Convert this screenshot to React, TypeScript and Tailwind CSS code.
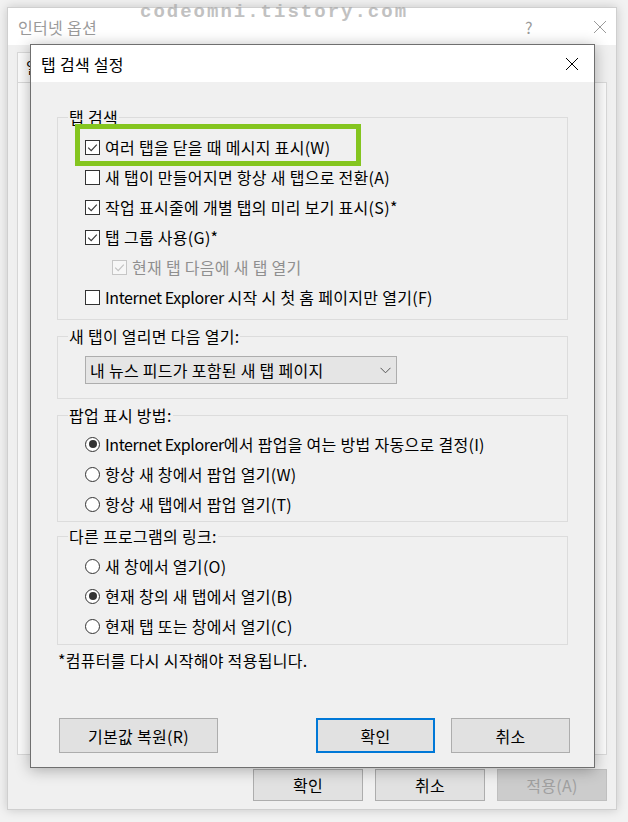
import React from "react";

const FONT = "font-['Noto_Sans_CJK_KR','Noto_Sans',sans-serif]";

function CheckBox({ checked, disabled }: { checked?: boolean; disabled?: boolean }) {
  return (
    <span
      className={`w-[15px] h-[15px] shrink-0 border flex items-center justify-center ${
        disabled ? "border-[#c6c6c6] bg-[#f7f7f7]" : "border-[#333333] bg-white"
      }`}
    >
      {checked && (
        <svg width="11" height="11" viewBox="0 0 11 11">
          <polyline
            points="1.2,5.6 4.2,8.6 9.8,2.6"
            fill="none"
            stroke={disabled ? "#c2c2c2" : "#3a3a3a"}
            strokeWidth="1.2"
          />
        </svg>
      )}
    </span>
  );
}

function Radio({ checked }: { checked?: boolean }) {
  return (
    <span className="w-[15px] h-[15px] shrink-0 rounded-full border border-[#333333] bg-white flex items-center justify-center">
      {checked && <span className="w-[8px] h-[8px] rounded-full bg-[#333333]" />}
    </span>
  );
}

// Latin runs are a bit narrower in the original font
function IE() {
  return <span className="tracking-[-0.4px]">Internet Explorer</span>;
}

function CheckRow({
  children,
  checked,
  disabled,
  indent,
}: {
  children: React.ReactNode;
  checked?: boolean;
  disabled?: boolean;
  indent?: boolean;
}) {
  return (
    <div className={`h-[30px] flex items-center gap-[5px] ${indent ? "pl-[27px]" : ""}`}>
      <CheckBox checked={checked} disabled={disabled} />
      <span className={disabled ? "text-[#8f8f8f]" : "text-black"}>{children}</span>
    </div>
  );
}

function RadioRow({ children, checked }: { children: React.ReactNode; checked?: boolean }) {
  return (
    <div className="h-[30px] flex items-center gap-[5px]">
      <Radio checked={checked} />
      <span>{children}</span>
    </div>
  );
}

function CloseIcon({ color = "#000" }: { color?: string }) {
  return (
    <svg width="14" height="14" viewBox="0 0 14 14">
      <path d="M1 1 L13 13 M13 1 L1 13" stroke={color} strokeWidth="1" fill="none" />
    </svg>
  );
}

export default function App() {
  return (
    <div className={`relative w-[628px] h-[822px] overflow-hidden bg-[#f2f2f2] text-[16px] tracking-[0.3px] ${FONT}`}>
      {/* back window: 인터넷 옵션 */}
      <div className="absolute left-[7px] top-[7px] w-[610px] h-[803px] bg-[#f0f0f0] border border-[#cfcfcf] shadow-[0_0_10px_rgba(0,0,0,0.18)] flex flex-col">
        <div className="h-[37px] bg-white flex items-center pl-[10px] text-[#9a9a9a]">
          <span>인터넷 옵션</span>
          <span className="ml-auto mr-[60px] text-[16px]">?</span>
          <span className="mr-[9px]">
            <CloseIcon color="#9a9a9a" />
          </span>
        </div>
        <div className="flex-1 flex flex-col px-[9px] pt-[7px]">
          <div className="h-[31px] w-[50px] border-t border-l border-r border-[#d9d9d9] bg-[#fbfbfb] -mb-[1px] pl-[8px] pt-[6px] text-[15px] leading-none">
            일반
          </div>
          <div className="h-[673px] border border-[#d9d9d9] bg-[#fbfbfb]" />
          <div className="mt-[14px] flex justify-end gap-[12px]">
            <div className="w-[110px] h-[32px] border border-[#adadad] bg-[#e1e1e1] flex items-center justify-center">확인</div>
            <div className="w-[110px] h-[32px] border border-[#adadad] bg-[#e1e1e1] flex items-center justify-center">취소</div>
            <div className="w-[110px] h-[32px] border border-[#bfbfbf] bg-[#cccccc] text-[#a0a0a0] flex items-center justify-center">적용(A)</div>
          </div>
        </div>
      </div>

      {/* watermark */}
      <div className="absolute left-[140px] top-[1px] font-['Liberation_Mono',monospace] font-bold text-[19px] tracking-[2px] leading-[22px] text-[#a8a8a8] opacity-70">
        codeomni.tistory.com
      </div>

      {/* front window: 탭 검색 설정 */}
      <div className="absolute left-[30px] top-[44px] w-[565px] h-[724px] border border-[#6f6f6f] bg-[#f0f0f0] shadow-[0_2px_14px_rgba(0,0,0,0.3)] flex flex-col">
        <div className="h-[37px] shrink-0 bg-white flex items-center pl-[10px] pr-[15px] text-black">
          <span>탭 검색 설정</span>
          <span className="ml-auto">
            <CloseIcon />
          </span>
        </div>

        <div className="flex-1 flex flex-col px-[26px] pb-[14px]">
          <fieldset className="mt-[24px] border border-[#dcdcdc] pl-[10px] pb-[7px]">
            <legend className="px-[1px] leading-[22px]">탭 검색</legend>
            <div className="relative ml-[17px] pt-[4px]">
              <div className="absolute left-[-10px] top-[-4px] w-[286px] h-[42px] border-[5px] border-[#84c51f]" />
              <CheckRow checked>여러 탭을 닫을 때 메시지 표시(W)</CheckRow>
              <CheckRow>새 탭이 만들어지면 항상 새 탭으로 전환(A)</CheckRow>
              <CheckRow checked>작업 표시줄에 개별 탭의 미리 보기 표시(S)*</CheckRow>
              <CheckRow checked>탭 그룹 사용(G)*</CheckRow>
              <CheckRow checked disabled indent>현재 탭 다음에 새 탭 열기</CheckRow>
              <CheckRow>
                <IE /> 시작 시 첫 홈 페이지만 열기(F)
              </CheckRow>
            </div>
          </fieldset>

          <fieldset className="mt-[5px] border border-[#dcdcdc] pl-[10px] pb-[14px]">
            <legend className="px-[1px] leading-[22px]">새 탭이 열리면 다음 열기:</legend>
            <div className="ml-[17px] pt-[9px]">
              <div className="w-[312px] h-[28px] border border-[#adadad] bg-[#e5e5e5] flex items-center pl-[4px] pr-[5px]">
                <span>내 뉴스 피드가 포함된 새 탭 페이지</span>
                <svg className="ml-auto" width="11" height="7" viewBox="0 0 11 7">
                  <polyline points="0.5,0.8 5.5,5.8 10.5,0.8" fill="none" stroke="#555" strokeWidth="1" />
                </svg>
              </div>
            </div>
          </fieldset>

          <fieldset className="mt-[5px] border border-[#dcdcdc] pl-[10px] pb-[2px]">
            <legend className="px-[1px] leading-[22px]">팝업 표시 방법:</legend>
            <div className="ml-[17px] pt-[3px]">
              <RadioRow checked>
                <IE />에서 팝업을 여는 방법 자동으로 결정(I)
              </RadioRow>
              <RadioRow>항상 새 창에서 팝업 열기(W)</RadioRow>
              <RadioRow>항상 새 탭에서 팝업 열기(T)</RadioRow>
            </div>
          </fieldset>

          <fieldset className="mt-[3px] border border-[#dcdcdc] pl-[10px] pb-[3px]">
            <legend className="px-[1px] leading-[22px]">다른 프로그램의 링크:</legend>
            <div className="ml-[17px] pt-[4px]">
              <RadioRow>새 창에서 열기(O)</RadioRow>
              <RadioRow checked>현재 창의 새 탭에서 열기(B)</RadioRow>
              <RadioRow>현재 탭 또는 창에서 열기(C)</RadioRow>
            </div>
          </fieldset>

          <div className="mt-[5px] pl-[1px] leading-[20px]">*컴퓨터를 다시 시작해야 적용됩니다.</div>

          <div className="mt-auto flex items-center pl-[2px] -mr-[2px]">
            <div className="w-[159px] h-[35px] border border-[#adadad] bg-[#e1e1e1] flex items-center justify-center">기본값 복원(R)</div>
            <div className="ml-auto flex gap-[16px]">
              <div className="w-[119px] h-[35px] border-2 border-[#0078d7] bg-[#e1e1e1] flex items-center justify-center">확인</div>
              <div className="w-[119px] h-[35px] border border-[#adadad] bg-[#e1e1e1] flex items-center justify-center">취소</div>
            </div>
          </div>
        </div>
      </div>
    </div>
  );
}
